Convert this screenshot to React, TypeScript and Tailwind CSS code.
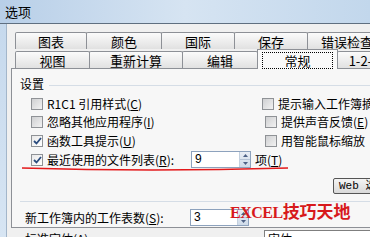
import React from "react";

const FONT = "font-['Noto_Sans_CJK_SC',sans-serif]";

function Check({ checked }: { checked?: boolean }) {
  return (
    <span
      className={`flex h-[12px] w-[12px] shrink-0 items-center justify-center border border-[#8f9296] ${
        checked ? "bg-gradient-to-br from-[#e9e9e9] to-[#ffffff]" : "bg-gradient-to-br from-[#cfd0d2] to-[#f2f2f2]"
      }`}
    >
      {checked && (
        <svg width="9" height="8" viewBox="0 0 9 8">
          <path d="M1 4 L3.5 6.5 L8 1" fill="none" stroke="#2b4c7e" strokeWidth="1.8" />
        </svg>
      )}
    </span>
  );
}

function Spin({ value, w }: { value: string; w: string }) {
  return (
    <div className={`flex h-[17px] ${w} border border-[#8da2bd] bg-white`}>
      <span className="flex-1 pl-[3px] font-['Liberation_Sans',sans-serif] text-[12px] leading-[15px]">{value}</span>
      <div className="flex w-[11px] flex-col border-l border-[#c3d0df] bg-gradient-to-b from-[#e9eef5] to-[#cfdbe9]">
        <div className="flex flex-1 items-center justify-center border-b border-[#b6c4d6]">
          <svg width="5" height="3" viewBox="0 0 5 3">
            <path d="M0 3 L2.5 0 L5 3 Z" fill="#4d6185" />
          </svg>
        </div>
        <div className="flex flex-1 items-center justify-center">
          <svg width="5" height="3" viewBox="0 0 5 3">
            <path d="M0 0 L2.5 3 L5 0 Z" fill="#4d6185" />
          </svg>
        </div>
      </div>
    </div>
  );
}

function Tab({ label, w, first }: { label: string; w: string; first?: boolean }) {
  return (
    <div
      className={`flex h-[17px] ${w} shrink-0 items-center justify-center rounded-t-[2px] border border-b-0 border-[#8d9096] bg-gradient-to-b from-[#fbfbfb] to-[#e1e1e1] text-[13px] leading-none ${
        first ? "" : "-ml-px"
      }`}
    >
      {label}
    </div>
  );
}

export default function App() {
  return (
    <div className={`relative h-[237px] w-[370px] overflow-hidden bg-[#f0f0f0] text-[12px] text-black ${FONT}`}>
      <div className="flex h-[24px] items-center border-b border-[#5f6f80] bg-gradient-to-r from-[#b8cfe8] via-[#d6e4f2] to-[#c2d7ec] pl-[5px] text-[13px]">
        选项
      </div>
      <div className="flex h-[213px]">
        <div className="w-[7px] shrink-0 border-r border-[#a3b6ca] bg-gradient-to-b from-[#c6d9ed] to-[#d7e5f3]" />
        <div className="min-w-0 flex-1 pt-[8px] pl-[5px]">
          <div className="ml-[3px] flex">
            <Tab label="图表" w="w-[72px]" first />
            <Tab label="颜色" w="w-[76px]" />
            <Tab label="国际" w="w-[74px]" />
            <Tab label="保存" w="w-[74px]" />
            <Tab label="错误检查" w="w-[80px]" />
          </div>
          <div className="ml-[3px] flex items-end">
            <Tab label="视图" w="w-[75px]" first />
            <Tab label="重新计算" w="w-[94px]" />
            <Tab label="编辑" w="w-[76px]" />
            <div className="relative z-10 -mb-px -ml-px flex h-[20px] w-[81px] shrink-0 items-center justify-center border border-b-0 border-[#8d9096] bg-[#f9f9f9] px-[4px] pt-[1px]">
              <div className="flex h-[17px] w-full items-center justify-center border border-dotted border-black text-[13px] leading-none">
                常规
              </div>
            </div>
            <Tab label="1-2-3帮助" w="w-[80px]" />
          </div>
          <div className="-ml-px h-[160px] w-[400px] border border-[#8d9096] bg-[#f7f7f7]">
            <div className="mt-[7px] flex h-[16px] items-center pl-[8px]">
              <span>设置</span>
              <span className="ml-[5px] mt-[2px] h-px flex-1 bg-[#d5dde6]" />
            </div>
            <div className="mt-[3px] pl-[19px]">
              {[
                ["R1C1 引用样式", "C", false, "提示输入工作簿摘要信息", "", false, "h-[18px]"],
                ["忽略其他应用程序", "I", false, "提供声音反馈", "E", false, "h-[18px]"],
                ["函数工具提示", "U", true, "用智能鼠标缩放", "", false, "h-[19px]"],
              ].map(([l, lk, lc, r, rk, rc, h]) => (
                <div key={l as string} className={`flex items-center ${h}`}>
                  <div className="flex w-[234px] items-center gap-[4px]">
                    <Check checked={lc as boolean} />
                    <span className="whitespace-nowrap leading-none">
                      {l}
                      {lk && (
                        <>
                          (<u>{lk}</u>)
                        </>
                      )}
                    </span>
                  </div>
                  <div className="flex items-center gap-[4px]">
                    <Check checked={rc as boolean} />
                    <span className="whitespace-nowrap leading-none">
                      {r}
                      {rk && (
                        <>
                          (<u>{rk}</u>)
                        </>
                      )}
                    </span>
                  </div>
                </div>
              ))}
              <div className="flex h-[19px] items-center">
                <div className="flex w-[160px] items-center gap-[4px]">
                  <Check checked />
                  <span className="whitespace-nowrap leading-none">
                    最近使用的文件列表(<u>R</u>):
                  </span>
                </div>
                <Spin value="9" w="w-[60px]" />
                <span className="ml-[4px] leading-none">
                  项(<u>T</u>)
                </span>
              </div>
            </div>
            <div className="ml-[321px] mt-[9px] flex h-[16px] w-[60px] items-center rounded-[2px] border border-[#555] bg-gradient-to-b from-[#f4f4f4] to-[#d9d9d9] pl-[5px] font-['Liberation_Mono','Noto_Sans_CJK_SC',monospace] text-[11px] leading-none">
              Web 选项
            </div>
            <div className="ml-[8px] mt-[7px] h-px bg-[#d5dde6]" />
            <div className="mt-[7px] flex h-[17px] items-center pl-[13px]">
              <span className="w-[165px] whitespace-nowrap leading-none">
                新工作簿内的工作表数(<u>S</u>):
              </span>
              <Spin value="3" w="w-[59px]" />
            </div>
            <div className="mt-[4px] flex h-[17px] items-center pl-[13px]">
              <span className="w-[239px] whitespace-nowrap leading-none">
                标准字体(<u>A</u>):
              </span>
              <div className="h-[17px] flex-1 border border-[#7f7f7f] bg-white pl-[3px] leading-[16px]">宋体</div>
            </div>
          </div>
        </div>
      </div>

      <svg className="pointer-events-none absolute left-0 top-0" width="370" height="237">
        <path d="M22 168 Q150 172 288 168" fill="none" stroke="#e3191b" strokeWidth="1.6" />
      </svg>
      <div className="pointer-events-none absolute left-[230px] top-[202px] flex items-baseline whitespace-nowrap font-bold leading-none text-[#d7191c]">
        <span className="font-['Liberation_Serif',serif] text-[16px] tracking-[-0.5px]">EXCEL</span>
        <span className="font-['Noto_Sans_CJK_SC',sans-serif] text-[17px]">技巧天地</span>
      </div>
    </div>
  );
}
